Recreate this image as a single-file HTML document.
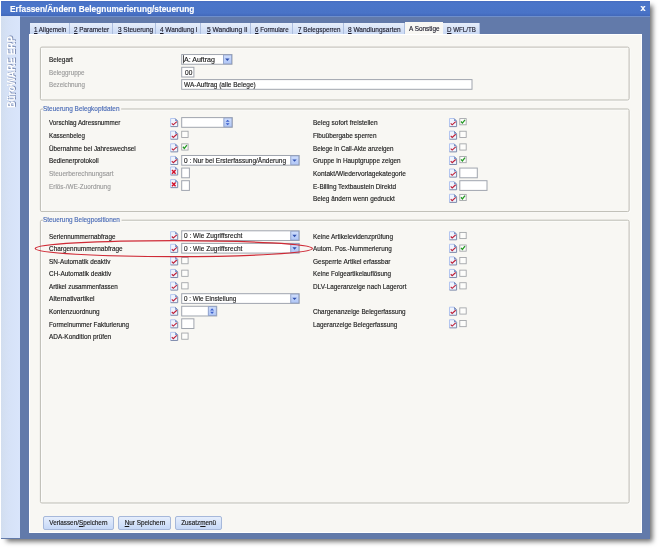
<!DOCTYPE html>
<html lang="de"><head><meta charset="utf-8"><title>Erfassen/Ändern Belegnumerierung/steuerung</title>
<style>
html,body{margin:0;padding:0;background:#fff;}
body{width:659px;height:548px;position:relative;overflow:hidden;font-family:"Liberation Sans",sans-serif;font-size:7.5px;color:#1a1a1a;-webkit-text-stroke:0.15px}
#shadow{position:absolute;left:8px;top:7px;width:642px;height:532px;background:#6a6a6a;box-shadow:0 0 5px 2.5px #6a6a6a;}
#win{will-change:transform;filter:blur(0.3px);position:absolute;left:0;top:0;width:650px;height:539px;background:#627aaa;border-left:1px solid #fff;border-top:1px solid #fff;box-sizing:border-box}
#win>*{margin-left:-1px;margin-top:-1px}
#title{position:absolute;left:1px;top:1px;width:649px;height:15px;background:linear-gradient(#466cc0 0,#4a75c9 2px,#4973c7 12px,#4268ba 15px);border-bottom:1px solid #6f8fcb}
#title b{position:absolute;left:9px;top:2.6px;line-height:11px;font-size:9px;color:#fff;white-space:nowrap;transform:scaleX(.922);transform-origin:0 0}
#close{position:absolute;left:639.5px;top:2px;font-size:9px;font-weight:bold;color:#fff;}
#side{position:absolute;left:1px;top:16px;width:19px;height:522px;background:linear-gradient(90deg,#d2deef,#d6e2f7 40%,#d9e5fb);}
#side span{position:absolute;left:-34.3px;top:49px;width:90px;height:14px;transform:rotate(-90deg) scaleX(.94);font-size:10px;font-weight:bold;color:#fff;white-space:nowrap;text-align:center;line-height:14px;text-shadow:0.7px 0.7px 0.6px #7486b0,0 0 1px #a0b1d6;}
#panel{position:absolute;left:29px;top:34px;width:613px;height:499px;background:#f8f7f3;box-shadow:inset 1px 1px 0 #fff,inset -1px -1px 0 #fff}
.tab{position:absolute;top:23px;height:11px;background:linear-gradient(#e6eefb,#cbdaf4);border-right:1px solid #aebfdf;box-sizing:border-box;line-height:11px;white-space:nowrap;text-align:center;color:#1a1a2a}
.tab.act{background:#f8f7f3;top:22px;height:12px;line-height:13px;border-right:none}
#ov{position:absolute;left:0;top:0}
.lab{position:absolute;white-space:nowrap;line-height:9px;transform:scaleX(.847);transform-origin:0 0}
.lab.dis{color:#9a9a9a}
.lab.tl{color:#1a1a2a}
.lab.gbt{color:#4a6bb6}
.t{display:inline-block;transform:scaleX(.847);transform-origin:50% 50%;font-style:normal}
.btn{position:absolute;top:516px;height:14px;box-sizing:border-box;border:1px solid #a6b8da;border-radius:2px;background:linear-gradient(#e6eefc,#c6d8f6);text-align:center;line-height:12px;white-space:nowrap}
</style></head><body>
<div id="shadow"></div>
<div id="win">
<div id="title"><b>Erfassen/Ändern Belegnumerierung/steuerung</b><span id="close">x</span></div>
<div id="side"><span>BüroWARE ERP</span></div>
<div id="panel"></div>
<div class="tab" style="left:30px;width:40px"></div>
<span class="lab tl" style="left:33.9px;top:24.6px;transform:scaleX(0.833)"><u>1</u> Allgemein</span>
<div class="tab" style="left:70px;width:43px"></div>
<span class="lab tl" style="left:74.3px;top:24.6px;transform:scaleX(0.850)"><u>2</u> Parameter</span>
<div class="tab" style="left:113px;width:43px"></div>
<span class="lab tl" style="left:117.6px;top:24.6px;transform:scaleX(0.859)"><u>3</u> Steuerung</span>
<div class="tab" style="left:156px;width:45px"></div>
<span class="lab tl" style="left:160.4px;top:24.6px;transform:scaleX(0.856)"><u>4</u> Wandlung I</span>
<div class="tab" style="left:201px;width:50px"></div>
<span class="lab tl" style="left:206.6px;top:24.6px;transform:scaleX(0.883)"><u>5</u> Wandlung II</span>
<div class="tab" style="left:251px;width:42px"></div>
<span class="lab tl" style="left:254.9px;top:24.6px;transform:scaleX(0.831)"><u>6</u> Formulare</span>
<div class="tab" style="left:293px;width:51px"></div>
<span class="lab tl" style="left:297.6px;top:24.6px;transform:scaleX(0.837)"><u>7</u> Belegsperren</span>
<div class="tab" style="left:344px;width:61px"></div>
<span class="lab tl" style="left:348.3px;top:24.6px;transform:scaleX(0.870)"><u>8</u> Wandlungsarten</span>
<div class="tab act" style="left:405px;width:38px"></div>
<span class="lab tl" style="left:408.8px;top:23.7px;transform:scaleX(0.853)">A Sonstige</span>
<div class="tab" style="left:443px;width:37px"></div>
<span class="lab tl" style="left:447.1px;top:24.6px;transform:scaleX(0.826)"><u>D</u> WFL/TB</span>
<svg id="ov" width="659" height="548" viewBox="0 0 659 548">
<defs><linearGradient id="bg" x1="0" y1="0" x2="0" y2="1"><stop offset="0" stop-color="#d0defc"/><stop offset="1" stop-color="#b0c6f6"/></linearGradient></defs>
<rect x="41.2" y="47.9" width="588.7" height="52.9" rx="1.5" fill="none" stroke="#fff" stroke-width="0.9"/>
<rect x="40.4" y="47.1" width="588.7" height="52.9" rx="1.5" fill="none" stroke="#bcbbb3" stroke-width="1"/>
<path d="M42.9 109 H41.9 Q40.4 109 40.4 110.5 V210.1 Q40.4 211.6 41.9 211.6 H627.6 Q629.1 211.6 629.1 210.1 V110.5 Q629.1 109 627.6 109 H121.2" transform="translate(0.8 0.8)" fill="none" stroke="#fff" stroke-width="0.9"/>
<path d="M42.9 109 H41.9 Q40.4 109 40.4 110.5 V210.1 Q40.4 211.6 41.9 211.6 H627.6 Q629.1 211.6 629.1 210.1 V110.5 Q629.1 109 627.6 109 H121.2" fill="none" stroke="#bcbbb3" stroke-width="1"/>
<path d="M42.9 220.2 H41.9 Q40.4 220.2 40.4 221.7 V501.5 Q40.4 503 41.9 503 H627.6 Q629.1 503 629.1 501.5 V221.7 Q629.1 220.2 627.6 220.2 H121.6" transform="translate(0.8 0.8)" fill="none" stroke="#fff" stroke-width="0.9"/>
<path d="M42.9 220.2 H41.9 Q40.4 220.2 40.4 221.7 V501.5 Q40.4 503 41.9 503 H627.6 Q629.1 503 629.1 501.5 V221.7 Q629.1 220.2 627.6 220.2 H121.6" fill="none" stroke="#bcbbb3" stroke-width="1"/>
<rect x="181.7" y="54.55" width="50.3" height="9.7" fill="#fff" stroke="#a0a5ae" stroke-width="1"/>
<rect x="223.2" y="55.05" width="8.3" height="8.7" fill="url(#bg)"/>
<rect x="223.6" y="54.95" width="8" height="8.9" fill="none" stroke="#8a9cc4" stroke-width="0.8"/>
<path d="M225.15 58.5 H229.55 L227.35 60.9 Z" fill="#2f4fae"/>
<rect x="181.7" y="67.3" width="12.2" height="9.7" fill="#fff" stroke="#a0a5ae" stroke-width="1"/>
<rect x="181.7" y="79.6" width="290.3" height="9.7" fill="#fff" stroke="#a0a5ae" stroke-width="1"/>
<g transform="translate(170 117.9)"><path d="M0.6 0.6 H5.2 L7.6 3 V8.5 H0.6 Z" fill="#f0f4fd"/><path d="M0.6 8.6 V0.6 H5.2" fill="none" stroke="#adc1ee" stroke-width="0.9"/><path d="M5.2 0.6 L7.7 3.1 V8.7 H0.6" fill="none" stroke="#7c89ab" stroke-width="1"/><path d="M5.1 0.7 V3.2 H7.6 Z" fill="#7690cc"/><path d="M1.8 5.4 L3.3 6.9 L6.8 3.7" fill="none" stroke="#bd1f38" stroke-width="1.15"/></g>
<rect x="181.7" y="117.6" width="50.6" height="9.7" fill="#fff" stroke="#a0a5ae" stroke-width="1"/>
<rect x="223.5" y="118.1" width="8.3" height="8.7" fill="url(#bg)"/>
<rect x="223.9" y="118" width="8" height="8.9" fill="none" stroke="#8a9cc4" stroke-width="0.8"/>
<path d="M225.65 121.75 L227.65 119.65 L229.65 121.75 M225.65 123.15 L227.65 125.25 L229.65 123.15" fill="#3d60cc" stroke="none"/>
<g transform="translate(170 130.53)"><path d="M0.6 0.6 H5.2 L7.6 3 V8.5 H0.6 Z" fill="#f0f4fd"/><path d="M0.6 8.6 V0.6 H5.2" fill="none" stroke="#adc1ee" stroke-width="0.9"/><path d="M5.2 0.6 L7.7 3.1 V8.7 H0.6" fill="none" stroke="#7c89ab" stroke-width="1"/><path d="M5.1 0.7 V3.2 H7.6 Z" fill="#7690cc"/><path d="M1.8 5.4 L3.3 6.9 L6.8 3.7" fill="none" stroke="#bd1f38" stroke-width="1.15"/></g>
<rect x="181.7" y="131.23" width="6.4" height="6.2" fill="#fdfdfb" stroke="#9fa2a6" stroke-width="0.85"/>
<g transform="translate(170 143.16)"><path d="M0.6 0.6 H5.2 L7.6 3 V8.5 H0.6 Z" fill="#f0f4fd"/><path d="M0.6 8.6 V0.6 H5.2" fill="none" stroke="#adc1ee" stroke-width="0.9"/><path d="M5.2 0.6 L7.7 3.1 V8.7 H0.6" fill="none" stroke="#7c89ab" stroke-width="1"/><path d="M5.1 0.7 V3.2 H7.6 Z" fill="#7690cc"/><path d="M1.8 5.4 L3.3 6.9 L6.8 3.7" fill="none" stroke="#bd1f38" stroke-width="1.15"/></g>
<rect x="181.7" y="143.86" width="6.4" height="6.2" fill="#fdfdfb" stroke="#9fa2a6" stroke-width="0.85"/>
<path d="M182.9 146.76 L184.3 148.36 L186.9 145.06" fill="none" stroke="#259a25" stroke-width="1.3"/>
<g transform="translate(170 155.79)"><path d="M0.6 0.6 H5.2 L7.6 3 V8.5 H0.6 Z" fill="#f0f4fd"/><path d="M0.6 8.6 V0.6 H5.2" fill="none" stroke="#adc1ee" stroke-width="0.9"/><path d="M5.2 0.6 L7.7 3.1 V8.7 H0.6" fill="none" stroke="#7c89ab" stroke-width="1"/><path d="M5.1 0.7 V3.2 H7.6 Z" fill="#7690cc"/><path d="M1.8 5.4 L3.3 6.9 L6.8 3.7" fill="none" stroke="#bd1f38" stroke-width="1.15"/></g>
<rect x="181.7" y="155.49" width="117.5" height="9.7" fill="#fff" stroke="#a0a5ae" stroke-width="1"/>
<rect x="290.4" y="155.99" width="8.3" height="8.7" fill="url(#bg)"/>
<rect x="290.8" y="155.89" width="8" height="8.9" fill="none" stroke="#8a9cc4" stroke-width="0.8"/>
<path d="M292.35 159.44 H296.75 L294.55 161.84 Z" fill="#2f4fae"/>
<g transform="translate(170 166.32)"><path d="M0.6 0.6 H5.2 L7.6 3 V8.5 H0.6 Z" fill="#f0f4fd"/><path d="M0.6 8.6 V0.6 H5.2" fill="none" stroke="#adc1ee" stroke-width="0.9"/><path d="M5.2 0.6 L7.7 3.1 V8.7 H0.6" fill="none" stroke="#7c89ab" stroke-width="1"/><path d="M5.1 0.7 V3.2 H7.6 Z" fill="#7690cc"/><path d="M2 3.6 L5.6 7.4 M5.6 3.6 L2 7.4" fill="none" stroke="#d3122a" stroke-width="1.4"/></g>
<rect x="181.7" y="168.07" width="7.7" height="9.7" fill="#fff" stroke="#a0a5ae" stroke-width="1"/>
<g transform="translate(170 178.95)"><path d="M0.6 0.6 H5.2 L7.6 3 V8.5 H0.6 Z" fill="#f0f4fd"/><path d="M0.6 8.6 V0.6 H5.2" fill="none" stroke="#adc1ee" stroke-width="0.9"/><path d="M5.2 0.6 L7.7 3.1 V8.7 H0.6" fill="none" stroke="#7c89ab" stroke-width="1"/><path d="M5.1 0.7 V3.2 H7.6 Z" fill="#7690cc"/><path d="M2 3.6 L5.6 7.4 M5.6 3.6 L2 7.4" fill="none" stroke="#d3122a" stroke-width="1.4"/></g>
<rect x="181.7" y="180.7" width="7.7" height="9.7" fill="#fff" stroke="#a0a5ae" stroke-width="1"/>
<g transform="translate(448.9 117.9)"><path d="M0.6 0.6 H5.2 L7.6 3 V8.5 H0.6 Z" fill="#f0f4fd"/><path d="M0.6 8.6 V0.6 H5.2" fill="none" stroke="#adc1ee" stroke-width="0.9"/><path d="M5.2 0.6 L7.7 3.1 V8.7 H0.6" fill="none" stroke="#7c89ab" stroke-width="1"/><path d="M5.1 0.7 V3.2 H7.6 Z" fill="#7690cc"/><path d="M1.8 5.4 L3.3 6.9 L6.8 3.7" fill="none" stroke="#bd1f38" stroke-width="1.15"/></g>
<rect x="459.8" y="118.6" width="6.4" height="6.2" fill="#fdfdfb" stroke="#9fa2a6" stroke-width="0.85"/>
<path d="M461 121.5 L462.4 123.1 L465 119.8" fill="none" stroke="#259a25" stroke-width="1.3"/>
<g transform="translate(448.9 130.53)"><path d="M0.6 0.6 H5.2 L7.6 3 V8.5 H0.6 Z" fill="#f0f4fd"/><path d="M0.6 8.6 V0.6 H5.2" fill="none" stroke="#adc1ee" stroke-width="0.9"/><path d="M5.2 0.6 L7.7 3.1 V8.7 H0.6" fill="none" stroke="#7c89ab" stroke-width="1"/><path d="M5.1 0.7 V3.2 H7.6 Z" fill="#7690cc"/><path d="M1.8 5.4 L3.3 6.9 L6.8 3.7" fill="none" stroke="#bd1f38" stroke-width="1.15"/></g>
<rect x="459.8" y="131.23" width="6.4" height="6.2" fill="#fdfdfb" stroke="#9fa2a6" stroke-width="0.85"/>
<g transform="translate(448.9 143.16)"><path d="M0.6 0.6 H5.2 L7.6 3 V8.5 H0.6 Z" fill="#f0f4fd"/><path d="M0.6 8.6 V0.6 H5.2" fill="none" stroke="#adc1ee" stroke-width="0.9"/><path d="M5.2 0.6 L7.7 3.1 V8.7 H0.6" fill="none" stroke="#7c89ab" stroke-width="1"/><path d="M5.1 0.7 V3.2 H7.6 Z" fill="#7690cc"/><path d="M1.8 5.4 L3.3 6.9 L6.8 3.7" fill="none" stroke="#bd1f38" stroke-width="1.15"/></g>
<rect x="459.8" y="143.86" width="6.4" height="6.2" fill="#fdfdfb" stroke="#9fa2a6" stroke-width="0.85"/>
<g transform="translate(448.9 155.79)"><path d="M0.6 0.6 H5.2 L7.6 3 V8.5 H0.6 Z" fill="#f0f4fd"/><path d="M0.6 8.6 V0.6 H5.2" fill="none" stroke="#adc1ee" stroke-width="0.9"/><path d="M5.2 0.6 L7.7 3.1 V8.7 H0.6" fill="none" stroke="#7c89ab" stroke-width="1"/><path d="M5.1 0.7 V3.2 H7.6 Z" fill="#7690cc"/><path d="M1.8 5.4 L3.3 6.9 L6.8 3.7" fill="none" stroke="#bd1f38" stroke-width="1.15"/></g>
<rect x="459.8" y="156.49" width="6.4" height="6.2" fill="#fdfdfb" stroke="#9fa2a6" stroke-width="0.85"/>
<path d="M461 159.39 L462.4 160.99 L465 157.69" fill="none" stroke="#259a25" stroke-width="1.3"/>
<g transform="translate(448.9 168.42)"><path d="M0.6 0.6 H5.2 L7.6 3 V8.5 H0.6 Z" fill="#f0f4fd"/><path d="M0.6 8.6 V0.6 H5.2" fill="none" stroke="#adc1ee" stroke-width="0.9"/><path d="M5.2 0.6 L7.7 3.1 V8.7 H0.6" fill="none" stroke="#7c89ab" stroke-width="1"/><path d="M5.1 0.7 V3.2 H7.6 Z" fill="#7690cc"/><path d="M1.8 5.4 L3.3 6.9 L6.8 3.7" fill="none" stroke="#bd1f38" stroke-width="1.15"/></g>
<rect x="459.8" y="168.07" width="17.5" height="9.7" fill="#fff" stroke="#a0a5ae" stroke-width="1"/>
<g transform="translate(448.9 181.05)"><path d="M0.6 0.6 H5.2 L7.6 3 V8.5 H0.6 Z" fill="#f0f4fd"/><path d="M0.6 8.6 V0.6 H5.2" fill="none" stroke="#adc1ee" stroke-width="0.9"/><path d="M5.2 0.6 L7.7 3.1 V8.7 H0.6" fill="none" stroke="#7c89ab" stroke-width="1"/><path d="M5.1 0.7 V3.2 H7.6 Z" fill="#7690cc"/><path d="M1.8 5.4 L3.3 6.9 L6.8 3.7" fill="none" stroke="#bd1f38" stroke-width="1.15"/></g>
<rect x="459.8" y="180.7" width="27.2" height="9.7" fill="#fff" stroke="#a0a5ae" stroke-width="1"/>
<g transform="translate(448.9 193.68)"><path d="M0.6 0.6 H5.2 L7.6 3 V8.5 H0.6 Z" fill="#f0f4fd"/><path d="M0.6 8.6 V0.6 H5.2" fill="none" stroke="#adc1ee" stroke-width="0.9"/><path d="M5.2 0.6 L7.7 3.1 V8.7 H0.6" fill="none" stroke="#7c89ab" stroke-width="1"/><path d="M5.1 0.7 V3.2 H7.6 Z" fill="#7690cc"/><path d="M1.8 5.4 L3.3 6.9 L6.8 3.7" fill="none" stroke="#bd1f38" stroke-width="1.15"/></g>
<rect x="459.8" y="194.38" width="6.4" height="6.2" fill="#fdfdfb" stroke="#9fa2a6" stroke-width="0.85"/>
<path d="M461 197.28 L462.4 198.88 L465 195.58" fill="none" stroke="#259a25" stroke-width="1.3"/>
<g transform="translate(170 231.1)"><path d="M0.6 0.6 H5.2 L7.6 3 V8.5 H0.6 Z" fill="#f0f4fd"/><path d="M0.6 8.6 V0.6 H5.2" fill="none" stroke="#adc1ee" stroke-width="0.9"/><path d="M5.2 0.6 L7.7 3.1 V8.7 H0.6" fill="none" stroke="#7c89ab" stroke-width="1"/><path d="M5.1 0.7 V3.2 H7.6 Z" fill="#7690cc"/><path d="M1.8 5.4 L3.3 6.9 L6.8 3.7" fill="none" stroke="#bd1f38" stroke-width="1.15"/></g>
<rect x="181.7" y="230.8" width="117.5" height="9.7" fill="#fff" stroke="#a0a5ae" stroke-width="1"/>
<rect x="290.4" y="231.3" width="8.3" height="8.7" fill="url(#bg)"/>
<rect x="290.8" y="231.2" width="8" height="8.9" fill="none" stroke="#8a9cc4" stroke-width="0.8"/>
<path d="M292.35 234.75 H296.75 L294.55 237.15 Z" fill="#2f4fae"/>
<g transform="translate(170 243.68)"><path d="M0.6 0.6 H5.2 L7.6 3 V8.5 H0.6 Z" fill="#f0f4fd"/><path d="M0.6 8.6 V0.6 H5.2" fill="none" stroke="#adc1ee" stroke-width="0.9"/><path d="M5.2 0.6 L7.7 3.1 V8.7 H0.6" fill="none" stroke="#7c89ab" stroke-width="1"/><path d="M5.1 0.7 V3.2 H7.6 Z" fill="#7690cc"/><path d="M1.8 5.4 L3.3 6.9 L6.8 3.7" fill="none" stroke="#bd1f38" stroke-width="1.15"/></g>
<rect x="181.7" y="243.38" width="117.5" height="9.7" fill="#fff" stroke="#a0a5ae" stroke-width="1"/>
<rect x="290.4" y="243.88" width="8.3" height="8.7" fill="url(#bg)"/>
<rect x="290.8" y="243.78" width="8" height="8.9" fill="none" stroke="#8a9cc4" stroke-width="0.8"/>
<path d="M292.35 247.33 H296.75 L294.55 249.73 Z" fill="#2f4fae"/>
<g transform="translate(170 256.26)"><path d="M0.6 0.6 H5.2 L7.6 3 V8.5 H0.6 Z" fill="#f0f4fd"/><path d="M0.6 8.6 V0.6 H5.2" fill="none" stroke="#adc1ee" stroke-width="0.9"/><path d="M5.2 0.6 L7.7 3.1 V8.7 H0.6" fill="none" stroke="#7c89ab" stroke-width="1"/><path d="M5.1 0.7 V3.2 H7.6 Z" fill="#7690cc"/><path d="M1.8 5.4 L3.3 6.9 L6.8 3.7" fill="none" stroke="#bd1f38" stroke-width="1.15"/></g>
<rect x="181.7" y="257.56" width="6.4" height="6.2" fill="#fdfdfb" stroke="#9fa2a6" stroke-width="0.85"/>
<g transform="translate(170 268.84)"><path d="M0.6 0.6 H5.2 L7.6 3 V8.5 H0.6 Z" fill="#f0f4fd"/><path d="M0.6 8.6 V0.6 H5.2" fill="none" stroke="#adc1ee" stroke-width="0.9"/><path d="M5.2 0.6 L7.7 3.1 V8.7 H0.6" fill="none" stroke="#7c89ab" stroke-width="1"/><path d="M5.1 0.7 V3.2 H7.6 Z" fill="#7690cc"/><path d="M1.8 5.4 L3.3 6.9 L6.8 3.7" fill="none" stroke="#bd1f38" stroke-width="1.15"/></g>
<rect x="181.7" y="270.14" width="6.4" height="6.2" fill="#fdfdfb" stroke="#9fa2a6" stroke-width="0.85"/>
<g transform="translate(170 281.42)"><path d="M0.6 0.6 H5.2 L7.6 3 V8.5 H0.6 Z" fill="#f0f4fd"/><path d="M0.6 8.6 V0.6 H5.2" fill="none" stroke="#adc1ee" stroke-width="0.9"/><path d="M5.2 0.6 L7.7 3.1 V8.7 H0.6" fill="none" stroke="#7c89ab" stroke-width="1"/><path d="M5.1 0.7 V3.2 H7.6 Z" fill="#7690cc"/><path d="M1.8 5.4 L3.3 6.9 L6.8 3.7" fill="none" stroke="#bd1f38" stroke-width="1.15"/></g>
<rect x="181.7" y="282.72" width="6.4" height="6.2" fill="#fdfdfb" stroke="#9fa2a6" stroke-width="0.85"/>
<g transform="translate(170 294)"><path d="M0.6 0.6 H5.2 L7.6 3 V8.5 H0.6 Z" fill="#f0f4fd"/><path d="M0.6 8.6 V0.6 H5.2" fill="none" stroke="#adc1ee" stroke-width="0.9"/><path d="M5.2 0.6 L7.7 3.1 V8.7 H0.6" fill="none" stroke="#7c89ab" stroke-width="1"/><path d="M5.1 0.7 V3.2 H7.6 Z" fill="#7690cc"/><path d="M1.8 5.4 L3.3 6.9 L6.8 3.7" fill="none" stroke="#bd1f38" stroke-width="1.15"/></g>
<rect x="181.7" y="293.7" width="117.5" height="9.7" fill="#fff" stroke="#a0a5ae" stroke-width="1"/>
<rect x="290.4" y="294.2" width="8.3" height="8.7" fill="url(#bg)"/>
<rect x="290.8" y="294.1" width="8" height="8.9" fill="none" stroke="#8a9cc4" stroke-width="0.8"/>
<path d="M292.35 297.65 H296.75 L294.55 300.05 Z" fill="#2f4fae"/>
<g transform="translate(170 306.58)"><path d="M0.6 0.6 H5.2 L7.6 3 V8.5 H0.6 Z" fill="#f0f4fd"/><path d="M0.6 8.6 V0.6 H5.2" fill="none" stroke="#adc1ee" stroke-width="0.9"/><path d="M5.2 0.6 L7.7 3.1 V8.7 H0.6" fill="none" stroke="#7c89ab" stroke-width="1"/><path d="M5.1 0.7 V3.2 H7.6 Z" fill="#7690cc"/><path d="M1.8 5.4 L3.3 6.9 L6.8 3.7" fill="none" stroke="#bd1f38" stroke-width="1.15"/></g>
<rect x="181.7" y="306.28" width="35" height="9.7" fill="#fff" stroke="#a0a5ae" stroke-width="1"/>
<rect x="207.9" y="306.78" width="8.3" height="8.7" fill="url(#bg)"/>
<rect x="208.3" y="306.68" width="8" height="8.9" fill="none" stroke="#8a9cc4" stroke-width="0.8"/>
<path d="M210.05 310.43 L212.05 308.33 L214.05 310.43 M210.05 311.83 L212.05 313.93 L214.05 311.83" fill="#3d60cc" stroke="none"/>
<g transform="translate(170 319.16)"><path d="M0.6 0.6 H5.2 L7.6 3 V8.5 H0.6 Z" fill="#f0f4fd"/><path d="M0.6 8.6 V0.6 H5.2" fill="none" stroke="#adc1ee" stroke-width="0.9"/><path d="M5.2 0.6 L7.7 3.1 V8.7 H0.6" fill="none" stroke="#7c89ab" stroke-width="1"/><path d="M5.1 0.7 V3.2 H7.6 Z" fill="#7690cc"/><path d="M1.8 5.4 L3.3 6.9 L6.8 3.7" fill="none" stroke="#bd1f38" stroke-width="1.15"/></g>
<rect x="181.7" y="318.81" width="12.2" height="9.7" fill="#fff" stroke="#a0a5ae" stroke-width="1"/>
<g transform="translate(170 331.74)"><path d="M0.6 0.6 H5.2 L7.6 3 V8.5 H0.6 Z" fill="#f0f4fd"/><path d="M0.6 8.6 V0.6 H5.2" fill="none" stroke="#adc1ee" stroke-width="0.9"/><path d="M5.2 0.6 L7.7 3.1 V8.7 H0.6" fill="none" stroke="#7c89ab" stroke-width="1"/><path d="M5.1 0.7 V3.2 H7.6 Z" fill="#7690cc"/><path d="M1.8 5.4 L3.3 6.9 L6.8 3.7" fill="none" stroke="#bd1f38" stroke-width="1.15"/></g>
<rect x="181.7" y="333.04" width="6.4" height="6.2" fill="#fdfdfb" stroke="#9fa2a6" stroke-width="0.85"/>
<g transform="translate(448.9 231.1)"><path d="M0.6 0.6 H5.2 L7.6 3 V8.5 H0.6 Z" fill="#f0f4fd"/><path d="M0.6 8.6 V0.6 H5.2" fill="none" stroke="#adc1ee" stroke-width="0.9"/><path d="M5.2 0.6 L7.7 3.1 V8.7 H0.6" fill="none" stroke="#7c89ab" stroke-width="1"/><path d="M5.1 0.7 V3.2 H7.6 Z" fill="#7690cc"/><path d="M1.8 5.4 L3.3 6.9 L6.8 3.7" fill="none" stroke="#bd1f38" stroke-width="1.15"/></g>
<rect x="459.8" y="232.4" width="6.4" height="6.2" fill="#fdfdfb" stroke="#9fa2a6" stroke-width="0.85"/>
<g transform="translate(448.9 243.68)"><path d="M0.6 0.6 H5.2 L7.6 3 V8.5 H0.6 Z" fill="#f0f4fd"/><path d="M0.6 8.6 V0.6 H5.2" fill="none" stroke="#adc1ee" stroke-width="0.9"/><path d="M5.2 0.6 L7.7 3.1 V8.7 H0.6" fill="none" stroke="#7c89ab" stroke-width="1"/><path d="M5.1 0.7 V3.2 H7.6 Z" fill="#7690cc"/><path d="M1.8 5.4 L3.3 6.9 L6.8 3.7" fill="none" stroke="#bd1f38" stroke-width="1.15"/></g>
<rect x="459.8" y="244.98" width="6.4" height="6.2" fill="#fdfdfb" stroke="#9fa2a6" stroke-width="0.85"/>
<path d="M461 247.88 L462.4 249.48 L465 246.18" fill="none" stroke="#259a25" stroke-width="1.3"/>
<g transform="translate(448.9 256.26)"><path d="M0.6 0.6 H5.2 L7.6 3 V8.5 H0.6 Z" fill="#f0f4fd"/><path d="M0.6 8.6 V0.6 H5.2" fill="none" stroke="#adc1ee" stroke-width="0.9"/><path d="M5.2 0.6 L7.7 3.1 V8.7 H0.6" fill="none" stroke="#7c89ab" stroke-width="1"/><path d="M5.1 0.7 V3.2 H7.6 Z" fill="#7690cc"/><path d="M1.8 5.4 L3.3 6.9 L6.8 3.7" fill="none" stroke="#bd1f38" stroke-width="1.15"/></g>
<rect x="459.8" y="257.56" width="6.4" height="6.2" fill="#fdfdfb" stroke="#9fa2a6" stroke-width="0.85"/>
<g transform="translate(448.9 268.84)"><path d="M0.6 0.6 H5.2 L7.6 3 V8.5 H0.6 Z" fill="#f0f4fd"/><path d="M0.6 8.6 V0.6 H5.2" fill="none" stroke="#adc1ee" stroke-width="0.9"/><path d="M5.2 0.6 L7.7 3.1 V8.7 H0.6" fill="none" stroke="#7c89ab" stroke-width="1"/><path d="M5.1 0.7 V3.2 H7.6 Z" fill="#7690cc"/><path d="M1.8 5.4 L3.3 6.9 L6.8 3.7" fill="none" stroke="#bd1f38" stroke-width="1.15"/></g>
<rect x="459.8" y="270.14" width="6.4" height="6.2" fill="#fdfdfb" stroke="#9fa2a6" stroke-width="0.85"/>
<g transform="translate(448.9 281.42)"><path d="M0.6 0.6 H5.2 L7.6 3 V8.5 H0.6 Z" fill="#f0f4fd"/><path d="M0.6 8.6 V0.6 H5.2" fill="none" stroke="#adc1ee" stroke-width="0.9"/><path d="M5.2 0.6 L7.7 3.1 V8.7 H0.6" fill="none" stroke="#7c89ab" stroke-width="1"/><path d="M5.1 0.7 V3.2 H7.6 Z" fill="#7690cc"/><path d="M1.8 5.4 L3.3 6.9 L6.8 3.7" fill="none" stroke="#bd1f38" stroke-width="1.15"/></g>
<rect x="459.8" y="282.72" width="6.4" height="6.2" fill="#fdfdfb" stroke="#9fa2a6" stroke-width="0.85"/>
<g transform="translate(448.9 306.58)"><path d="M0.6 0.6 H5.2 L7.6 3 V8.5 H0.6 Z" fill="#f0f4fd"/><path d="M0.6 8.6 V0.6 H5.2" fill="none" stroke="#adc1ee" stroke-width="0.9"/><path d="M5.2 0.6 L7.7 3.1 V8.7 H0.6" fill="none" stroke="#7c89ab" stroke-width="1"/><path d="M5.1 0.7 V3.2 H7.6 Z" fill="#7690cc"/><path d="M1.8 5.4 L3.3 6.9 L6.8 3.7" fill="none" stroke="#bd1f38" stroke-width="1.15"/></g>
<rect x="459.8" y="307.88" width="6.4" height="6.2" fill="#fdfdfb" stroke="#9fa2a6" stroke-width="0.85"/>
<g transform="translate(448.9 319.16)"><path d="M0.6 0.6 H5.2 L7.6 3 V8.5 H0.6 Z" fill="#f0f4fd"/><path d="M0.6 8.6 V0.6 H5.2" fill="none" stroke="#adc1ee" stroke-width="0.9"/><path d="M5.2 0.6 L7.7 3.1 V8.7 H0.6" fill="none" stroke="#7c89ab" stroke-width="1"/><path d="M5.1 0.7 V3.2 H7.6 Z" fill="#7690cc"/><path d="M1.8 5.4 L3.3 6.9 L6.8 3.7" fill="none" stroke="#bd1f38" stroke-width="1.15"/></g>
<rect x="459.8" y="320.46" width="6.4" height="6.2" fill="#fdfdfb" stroke="#9fa2a6" stroke-width="0.85"/>
<path d="M183.5 55.2 V63.4" stroke="#222" stroke-width="0.8"/>
<ellipse cx="173.8" cy="248.6" rx="138.6" ry="8" fill="none" stroke="#cf2a36" stroke-width="1.2"/>
</svg>
<span class="lab gbt" style="left:43.2px;top:103.8px;transform:scaleX(0.861)">Steuerung Belegkopfdaten</span>
<span class="lab gbt" style="left:43.2px;top:215px;transform:scaleX(0.853)">Steuerung Belegpositionen</span>
<span class="lab " style="left:49.1px;top:55.15px;transform:scaleX(0.855)">Belegart</span>
<span class="lab dis" style="left:49.1px;top:67.75px;transform:scaleX(0.837)">Beleggruppe</span>
<span class="lab dis" style="left:49.1px;top:80.35px;transform:scaleX(0.828)">Bezeichnung</span>
<span class="lab " style="left:183.7px;top:55.1px;transform:scaleX(0.938)">A: Auftrag</span>
<span class="lab " style="left:184.7px;top:67.85px;transform:scaleX(0.875)">00</span>
<span class="lab " style="left:183.7px;top:80.15px;transform:scaleX(0.867)">WA-Auftrag (alle Belege)</span>
<span class="lab " style="left:49.1px;top:118.35px;transform:scaleX(0.835)">Vorschlag Adressnummer</span>
<span class="lab " style="left:49.1px;top:130.98px;transform:scaleX(0.828)">Kassenbeleg</span>
<span class="lab " style="left:49.1px;top:143.61px;transform:scaleX(0.842)">Übernahme bei Jahreswechsel</span>
<span class="lab " style="left:49.1px;top:156.24px;transform:scaleX(0.850)">Bedienerprotokoll</span>
<span class="lab " style="left:183.7px;top:156.04px;transform:scaleX(0.868)">0 : Nur bei Ersterfassung/Änderung</span>
<span class="lab dis" style="left:49.1px;top:168.87px;transform:scaleX(0.870)">Steuerberechnungsart</span>
<span class="lab dis" style="left:49.1px;top:181.5px;transform:scaleX(0.851)">Erlös-/WE-Zuordnung</span>
<span class="lab " style="left:313.2px;top:118.35px;transform:scaleX(0.870)">Beleg sofort freistellen</span>
<span class="lab " style="left:313.2px;top:130.98px;transform:scaleX(0.860)">Fibuübergabe sperren</span>
<span class="lab " style="left:313.2px;top:143.61px;transform:scaleX(0.836)">Belege in Call-Akte anzeigen</span>
<span class="lab " style="left:313.2px;top:156.24px;transform:scaleX(0.854)">Gruppe in Hauptgruppe zeigen</span>
<span class="lab " style="left:313.2px;top:168.87px;transform:scaleX(0.871)">Kontakt/Wiedervorlagekategorie</span>
<span class="lab " style="left:313.2px;top:181.5px;transform:scaleX(0.852)">E-Billing Textbaustein Direktd</span>
<span class="lab " style="left:313.2px;top:194.13px;transform:scaleX(0.857)">Beleg ändern wenn gedruckt</span>
<span class="lab " style="left:49.1px;top:231.55px;transform:scaleX(0.843)">Seriennummernabfrage</span>
<span class="lab " style="left:183.7px;top:231.35px;transform:scaleX(0.872)">0 : Wie Zugriffsrecht</span>
<span class="lab " style="left:49.1px;top:244.13px;transform:scaleX(0.857)">Chargennummernabfrage</span>
<span class="lab " style="left:183.7px;top:243.93px;transform:scaleX(0.872)">0 : Wie Zugriffsrecht</span>
<span class="lab " style="left:49.1px;top:256.71px;transform:scaleX(0.851)">SN-Automatik deaktiv</span>
<span class="lab " style="left:49.1px;top:269.29px;transform:scaleX(0.858)">CH-Automatik deaktiv</span>
<span class="lab " style="left:49.1px;top:281.87px;transform:scaleX(0.841)">Artikel zusammenfassen</span>
<span class="lab " style="left:49.1px;top:294.45px;transform:scaleX(0.889)">Alternativartikel</span>
<span class="lab " style="left:183.7px;top:294.25px;transform:scaleX(0.840)">0 : Wie Einstellung</span>
<span class="lab " style="left:49.1px;top:307.03px;transform:scaleX(0.854)">Kontenzuordnung</span>
<span class="lab " style="left:49.1px;top:319.61px;transform:scaleX(0.843)">Formelnummer Fakturierung</span>
<span class="lab " style="left:49.1px;top:332.19px;transform:scaleX(0.857)">ADA-Kondition prüfen</span>
<span class="lab " style="left:313.2px;top:231.55px;transform:scaleX(0.861)">Keine Artikelevidenzprüfung</span>
<span class="lab " style="left:313.2px;top:244.13px;transform:scaleX(0.847)">Autom. Pos.-Nummerierung</span>
<span class="lab " style="left:313.2px;top:256.71px;transform:scaleX(0.868)">Gesperrte Artikel erfassbar</span>
<span class="lab " style="left:313.2px;top:269.29px;transform:scaleX(0.843)">Keine Folgeartikelauflösung</span>
<span class="lab " style="left:313.2px;top:281.87px;transform:scaleX(0.850)">DLV-Lageranzeige nach Lagerort</span>
<span class="lab " style="left:313.2px;top:307.03px;transform:scaleX(0.847)">Chargenanzeige Belegerfassung</span>
<span class="lab " style="left:313.2px;top:319.61px;transform:scaleX(0.846)">Lageranzeige Belegerfassung</span>
<div class="btn" style="left:43px;width:71px"><i class="t">Verlassen/<u>S</u>peichern</i></div>
<div class="btn" style="left:118px;width:53px"><i class="t"><u>N</u>ur Speichern</i></div>
<div class="btn" style="left:175px;width:47px"><i class="t">Zusatz<u>m</u>enü</i></div>
</div></body></html>
